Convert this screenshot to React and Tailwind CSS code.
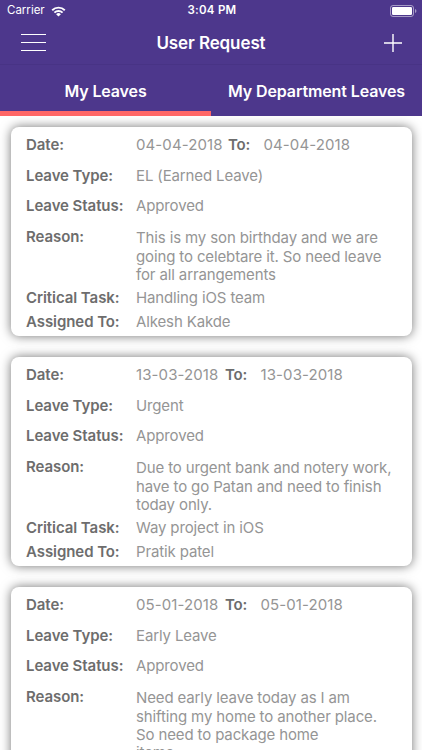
const leaves = [
  {
    from: '04-04-2018',
    to: '04-04-2018',
    dateWidth: 'w-[92px]',
    type: 'EL (Earned Leave)',
    status: 'Approved',
    reason: ['This is my son birthday and we are', 'going to celebtare it. So need leave', 'for all arrangements'],
    task: 'Handling iOS team',
    assignedTo: 'Alkesh Kakde',
  },
  {
    from: '13-03-2018',
    to: '13-03-2018',
    dateWidth: 'w-[89px]',
    type: 'Urgent',
    status: 'Approved',
    reason: ['Due to urgent bank and notery work,', 'have to go Patan and need to finish', 'today only.'],
    task: 'Way project in iOS',
    assignedTo: 'Pratik patel',
  },
  {
    from: '05-01-2018',
    to: '05-01-2018',
    dateWidth: 'w-[89px]',
    type: 'Early Leave',
    status: 'Approved',
    reason: ['Need early leave today as I am', 'shifting my home to another place.', 'So need to package home', 'items.'],
  },
];

const Label = ({ children }) => (
  <span className="w-[110px] shrink-0 font-semibold tracking-[-0.07px] text-[#6d6d6d]">{children}</span>
);

const LeaveCard = ({ leave }) => (
  <div className="h-[209.5px] shrink-0 rounded-[8px] bg-white pl-[15.5px] pt-[3.75px] shadow-[0_0_11px_0_rgba(0,0,0,0.55)] text-[15px] tracking-[-0.13px] text-[#959595] whitespace-nowrap">
    <div className="flex h-[30.5px] items-center">
      <Label>Date:</Label>
      <span className={`${leave.dateWidth} tracking-[0.1px]`}>{leave.from}</span>
      <span className="w-[35.5px] font-semibold text-[#6d6d6d]">To:</span>
      <span className="tracking-[0.1px]">{leave.to}</span>
    </div>
    <div className="flex h-[30.5px] items-center">
      <Label>Leave Type:</Label>
      <span>{leave.type}</span>
    </div>
    <div className="flex h-[30.5px] items-center">
      <Label>Leave Status:</Label>
      <span>{leave.status}</span>
    </div>
    <div className="flex h-[65px]">
      <div className="flex h-[31px] items-center">
        <Label>Reason:</Label>
      </div>
      <div className="pt-[7.5px] leading-[18.3px]">
        {leave.reason.map((line) => (
          <p key={line}>{line}</p>
        ))}
      </div>
    </div>
    {leave.task && (
      <div className="flex h-[23.5px] items-center">
        <Label>Critical Task:</Label>
        <span>{leave.task}</span>
      </div>
    )}
    {leave.assignedTo && (
      <div className="flex h-[23.5px] items-center">
        <Label>Assigned To:</Label>
        <span>{leave.assignedTo}</span>
      </div>
    )}
  </div>
);

const StatusBar = () => (
  <div className="grid h-[22px] grid-cols-3 items-center pl-[7px] pr-[5px] text-[11.5px]">
    <div className="flex items-center gap-[6px]">
      <span>Carrier</span>
      <svg width="15" height="11" viewBox="0 0 14 11" fill="none" stroke="white" strokeWidth="1.9">
        <path d="M0.7 4.2a9 9 0 0 1 12.6 0" />
        <path d="M2.9 6.6a5.9 5.9 0 0 1 8.2 0" />
        <path d="M7 10.6 4.6 8.2a3.4 3.4 0 0 1 4.8 0Z" fill="white" stroke="none" />
      </svg>
    </div>
    <span className="text-center font-semibold tracking-[0.25px]">3:04 PM</span>
    <svg className="justify-self-end" width="27" height="12" viewBox="0 0 27 12">
      <rect x="0.5" y="0.5" width="23" height="11" rx="2.5" fill="none" stroke="white" strokeOpacity="0.5" />
      <rect x="2" y="2" width="20" height="8" rx="1.2" fill="white" />
      <path d="M25 4v4a2.1 2.1 0 0 0 0-4Z" fill="white" fillOpacity="0.5" />
    </svg>
  </div>
);

const App = () => {
  return (
    <div className="flex h-[750px] w-[422px] flex-col overflow-hidden bg-white font-['Inter',sans-serif]">
      <header className="bg-[#4d378c] text-white">
        <StatusBar />
        <div className="grid h-[43px] grid-cols-3 items-center border-b border-[#483385] px-[20.5px]">
          <svg className="mb-[2px]" width="25" height="19" viewBox="0 0 25 19" stroke="white" strokeWidth="1.2">
            <path d="M0 1.5h25M0 9.5h25M0 17.5h25" />
          </svg>
          <h1 className="pt-[2px] text-center text-[17px] font-semibold tracking-[-0.1px]">User Request</h1>
          <svg className="justify-self-end" width="18" height="18" viewBox="0 0 18 18" stroke="white" strokeWidth="1.4">
            <path d="M9 0v18M0 9h18" />
          </svg>
        </div>
        <div className="grid h-[51px] grid-cols-2 text-[16px] font-semibold tracking-[-0.12px]">
          <button className="border-b-[5px] border-[#ff6666] pt-[6px]">My Leaves</button>
          <button className="pt-[1px]">My Department Leaves</button>
        </div>
      </header>
      <main className="flex min-h-0 flex-1 flex-col gap-[20.5px] overflow-hidden px-[10.5px] pt-[10.5px]">
        {leaves.map((leave) => (
          <LeaveCard key={leave.from} leave={leave} />
        ))}
      </main>
    </div>
  );
};

export default App;
